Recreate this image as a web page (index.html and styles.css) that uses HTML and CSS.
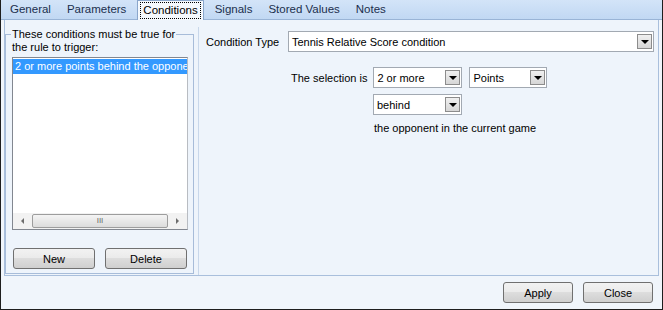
FILE: index.html
```html
<html>
  <head>
    <title>Rule Editor</title>
    <link rel="stylesheet" href="styles.css">
  </head>
  <body>
    <div class="window">
      <div class="tabs">
        <div class="tab">General</div>
        <div class="tab">Parameters</div>
        <div class="tab active"><span class="focus">Conditions</span></div>
        <div class="tab">Signals</div>
        <div class="tab">Stored Values</div>
        <div class="tab">Notes</div>
      </div>

      <div class="page">
        <fieldset class="group">
          <legend>These conditions must be true for</legend>
          <div class="legend-rest">the rule to trigger:</div>
          <div class="listbox">
            <div class="items">
              <div class="item selected">2 or more points behind the opponent in the current game</div>
            </div>
            <div class="hscroll">
              <span class="arrow left"></span>
              <span class="thumb"><span class="grip">III</span></span>
              <span class="arrow right"></span>
            </div>
          </div>
          <div class="group-buttons">
            <button class="btn">New</button>
            <button class="btn">Delete</button>
          </div>
        </fieldset>

        <div class="detail">
          <div class="row type-row">
            <span class="label">Condition Type</span>
            <div class="combo wide">
              <span class="value">Tennis Relative Score condition</span>
              <span class="drop"></span>
            </div>
          </div>

          <div class="sentence">
            <div class="row">
              <span class="label">The selection is</span>
              <div class="combo small">
                <span class="value">2 or more</span>
                <span class="drop"></span>
              </div>
              <div class="combo unit">
                <span class="value">Points</span>
                <span class="drop"></span>
              </div>
            </div>
            <div class="indent">
              <div class="combo small">
                <span class="value">behind</span>
                <span class="drop"></span>
              </div>
              <p class="tail">the opponent in the current game</p>
            </div>
          </div>
        </div>
      </div>

      <div class="footer">
        <button class="btn wide-btn">Apply</button>
        <button class="btn wide-btn">Close</button>
      </div>
    </div>
  </body>
</html>
```

FILE: styles.css
```css
body {
  margin: 0;
  font-family: "Liberation Sans", Arial, sans-serif;
  font-size: 11px;
  color: #000;
}

.window {
  width: 663px;
  height: 310px;
  box-sizing: border-box;
  border: 1px solid #1e1e1e;
  border-top: none;
  background: #f0f5fb;
  display: flex;
  flex-direction: column;
}

/* tab strip */
.tabs {
  height: 20px;
  box-sizing: border-box;
  display: flex;
  padding-left: 1px;
  background: linear-gradient(#d3e4f8, #c1d8f3);
  border-bottom: 1px solid #99b4d6;
}

.tab {
  padding: 0 8px;
  font-size: 11.5px;
  line-height: 19px;
  color: #1b2f4d;
}

.tab.active {
  background: #f5f9fd;
  border: 1px solid #8aa6cb;
  border-bottom: none;
  margin: 0 3px -1px 3px;
  padding: 0 2px;
  color: #000;
}

.focus {
  display: inline-block;
  border: 1px dotted #000;
  line-height: 15px;
  padding: 0 2px;
  margin-top: 1px;
}

/* tab page */
.page {
  height: 256px;
  box-sizing: border-box;
  display: flex;
  background: #eef4fb;
  border-left: 1px solid #a9bfdc;
  border-right: 1px solid #a9bfdc;
  border-bottom: 1px solid #a9bfdc;
  margin: 0 3px;
  padding: 7px 0 0 0;
}

.group {
  width: 189px;
  min-width: 0;
  flex: none;
  box-sizing: border-box;
  margin: 0 0 1px 0;
  padding: 0 5px 4px 6px;
  border: 1px solid #a7bcd9;
  display: flex;
  flex-direction: column;
}

.group legend {
  padding: 0 1px;
  margin-left: -1px;
  line-height: 14px;
}

.legend-rest {
  line-height: 14px;
  margin-top: -1px;
}

.listbox {
  margin-top: 3px;
  height: 173px;
  box-sizing: border-box;
  border: 1px solid #828790;
  border-right-color: #b8bcc2;
  background: #fff;
  display: flex;
  flex-direction: column;
  min-width: 0;
}

.items {
  flex: 1;
  overflow: hidden;
  padding: 1px 0 0 0;
}

.item {
  white-space: nowrap;
  line-height: 15px;
  padding-left: 2px;
}

.item.selected {
  background: #3399ff;
  color: #fff;
}

.hscroll {
  height: 16px;
  background: #f2f2f2;
  display: flex;
  align-items: center;
  padding: 0 4px;
  gap: 8px;
}

.arrow {
  width: 0;
  height: 0;
  border-top: 3px solid transparent;
  border-bottom: 3px solid transparent;
}

.arrow.left {
  border-right: 3px solid #6d6d6d;
  margin-left: 4px;
}

.arrow.right {
  border-left: 3px solid #6d6d6d;
  margin-right: 4px;
}

.thumb {
  flex: 1;
  height: 14px;
  box-sizing: border-box;
  border: 1px solid #9d9d9d;
  border-radius: 2px;
  background: linear-gradient(#f4f4f4, #dcdcdc);
  display: flex;
  justify-content: center;
  align-items: center;
}

.grip {
  font-size: 8px;
  color: #666;
  line-height: 8px;
}

.group-buttons {
  display: flex;
  justify-content: space-between;
  margin-top: auto;
  padding: 0 1px;
}

.btn {
  width: 82px;
  height: 21px;
  font-family: inherit;
  font-size: 11px;
  color: #000;
  border: 1px solid #707070;
  border-radius: 3px;
  background: linear-gradient(#f2f2f2 0%, #ebebeb 45%, #dddddd 50%, #cfcfcf 100%);
  padding: 0;
}

/* right side */
.detail {
  flex: 1;
  min-width: 0;
  border-left: 1px solid #c8d7ea;
  margin-left: 4px;
  padding: 4px 0 0 7px;
}

.row {
  display: flex;
  align-items: center;
  gap: 6px;
}

.type-row .label {
  width: 76px;
}

.combo {
  height: 21px;
  box-sizing: border-box;
  border: 1px solid #a2a9b2;
  background: #fff;
  display: flex;
  align-items: center;
  padding: 0 1px 0 3px;
}

.combo.wide {
  width: 366px;
}

.combo.small {
  width: 89px;
}

.combo.unit {
  width: 78px;
  margin-left: 1px;
}

.value {
  flex: 1;
  white-space: nowrap;
}

.drop {
  width: 15px;
  height: 15px;
  box-sizing: border-box;
  border: 1px solid #8c8c8c;
  background: linear-gradient(#f0f0f0, #d6d6d6);
  position: relative;
}

.drop::after {
  content: "";
  position: absolute;
  left: 3px;
  top: 5px;
  border-left: 4px solid transparent;
  border-right: 4px solid transparent;
  border-top: 4px solid #000;
}

.sentence {
  margin: 15px 0 0 85px;
}

.indent {
  margin-left: 82px;
  margin-top: 6px;
}

.tail {
  margin: 7px 0 0 1px;
}

.footer {
  flex: 1;
  display: flex;
  justify-content: flex-end;
  align-items: flex-start;
  gap: 10px;
  padding: 6px 9px 0 0;
}

.wide-btn {
  width: 70px;
}
```
